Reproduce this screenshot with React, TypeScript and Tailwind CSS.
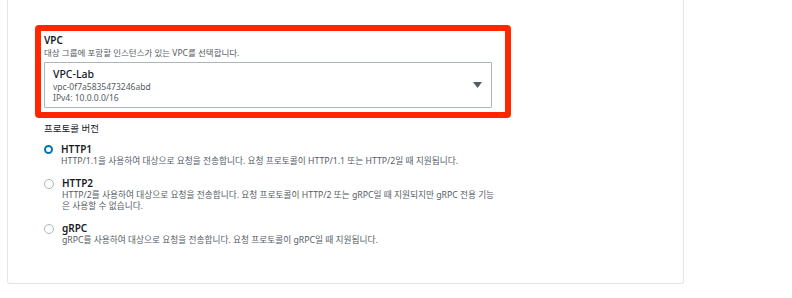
const font = "font-['Noto_Sans','Noto_Sans_CJK_KR',sans-serif]";

type Option = {
  value: string;
  label: string;
  description: string;
};

const protocols: Option[] = [
  {
    value: "http1",
    label: "HTTP1",
    description:
      "HTTP/1.1을 사용하여 대상으로 요청을 전송합니다. 요청 프로토콜이 HTTP/1.1 또는 HTTP/2일 때 지원됩니다.",
  },
  {
    value: "http2",
    label: "HTTP2",
    description:
      "HTTP/2를 사용하여 대상으로 요청을 전송합니다. 요청 프로토콜이 HTTP/2 또는 gRPC일 때 지원되지만 gRPC 전용 기능은 사용할 수 없습니다.",
  },
  {
    value: "grpc",
    label: "gRPC",
    description:
      "gRPC를 사용하여 대상으로 요청을 전송합니다. 요청 프로토콜이 gRPC일 때 지원됩니다.",
  },
];

export default function App() {
  const selected = "http1";

  return (
    <div className={`w-[792px] h-[298px] bg-white overflow-hidden ${font}`}>
      <div className="ml-[7px] w-[677px] h-[284px] border-x border-b border-[#e3e6e6] rounded-b-[3px] pl-[27px] pt-[25px]">
        {/* VPC selection, highlighted */}
        <div className="w-[476px] h-[93px] border-[6px] border-[#ff2600] rounded-[4px] pl-[3px] pr-[13px] pt-[2px]">
          <p className="text-[10px] leading-[14px] font-semibold text-[#16191f]">VPC</p>
          <p className="text-[8.5px] leading-[12px] text-[#545b64]">
            대상 그룹에 포함할 인스턴스가 있는 VPC를 선택합니다.
          </p>
          <div className="mt-[3px] h-[46px] border border-[#aab7b8] rounded-[1px] flex items-center justify-between pl-[8px] pr-[9px]">
            <div className="flex flex-col">
              <span className="text-[10.5px] leading-[14px] font-medium text-[#16191f]">VPC-Lab</span>
              <span className="text-[8.5px] leading-[11px] text-[#545b64]">vpc-0f7a5835473246abd</span>
              <span className="text-[8.5px] leading-[11px] text-[#545b64]">IPv4: 10.0.0.0/16</span>
            </div>
            <svg width="9" height="6" viewBox="0 0 9 6" className="mb-[1px]">
              <path d="M0 0h9L4.5 6z" fill="#545b64" />
            </svg>
          </div>
        </div>

        {/* Protocol version */}
        <div className="pl-[9px] mt-[4px]">
          <p className="text-[9.5px] leading-[14px] text-[#16191f]">프로토콜 버전</p>
          <div className="flex flex-col gap-[9px] mt-[6px]">
            {protocols.map((p) => (
              <label key={p.value} className="flex gap-[8px]">
                <span
                  className={
                    p.value === selected
                      ? "mt-[3px] w-[9px] h-[9px] rounded-full border-[2.5px] border-[#0073bb] shrink-0"
                      : "mt-[3px] w-[10px] h-[10px] rounded-full border border-[#aab7b8] shrink-0"
                  }
                />
                <span className="flex flex-col w-[437px]">
                  <span className="text-[10px] leading-[14px] font-semibold text-[#16191f]">{p.label}</span>
                  <span className="text-[8.7px] leading-[11px] text-[#545b64]">{p.description}</span>
                </span>
              </label>
            ))}
          </div>
        </div>
      </div>
    </div>
  );
}
